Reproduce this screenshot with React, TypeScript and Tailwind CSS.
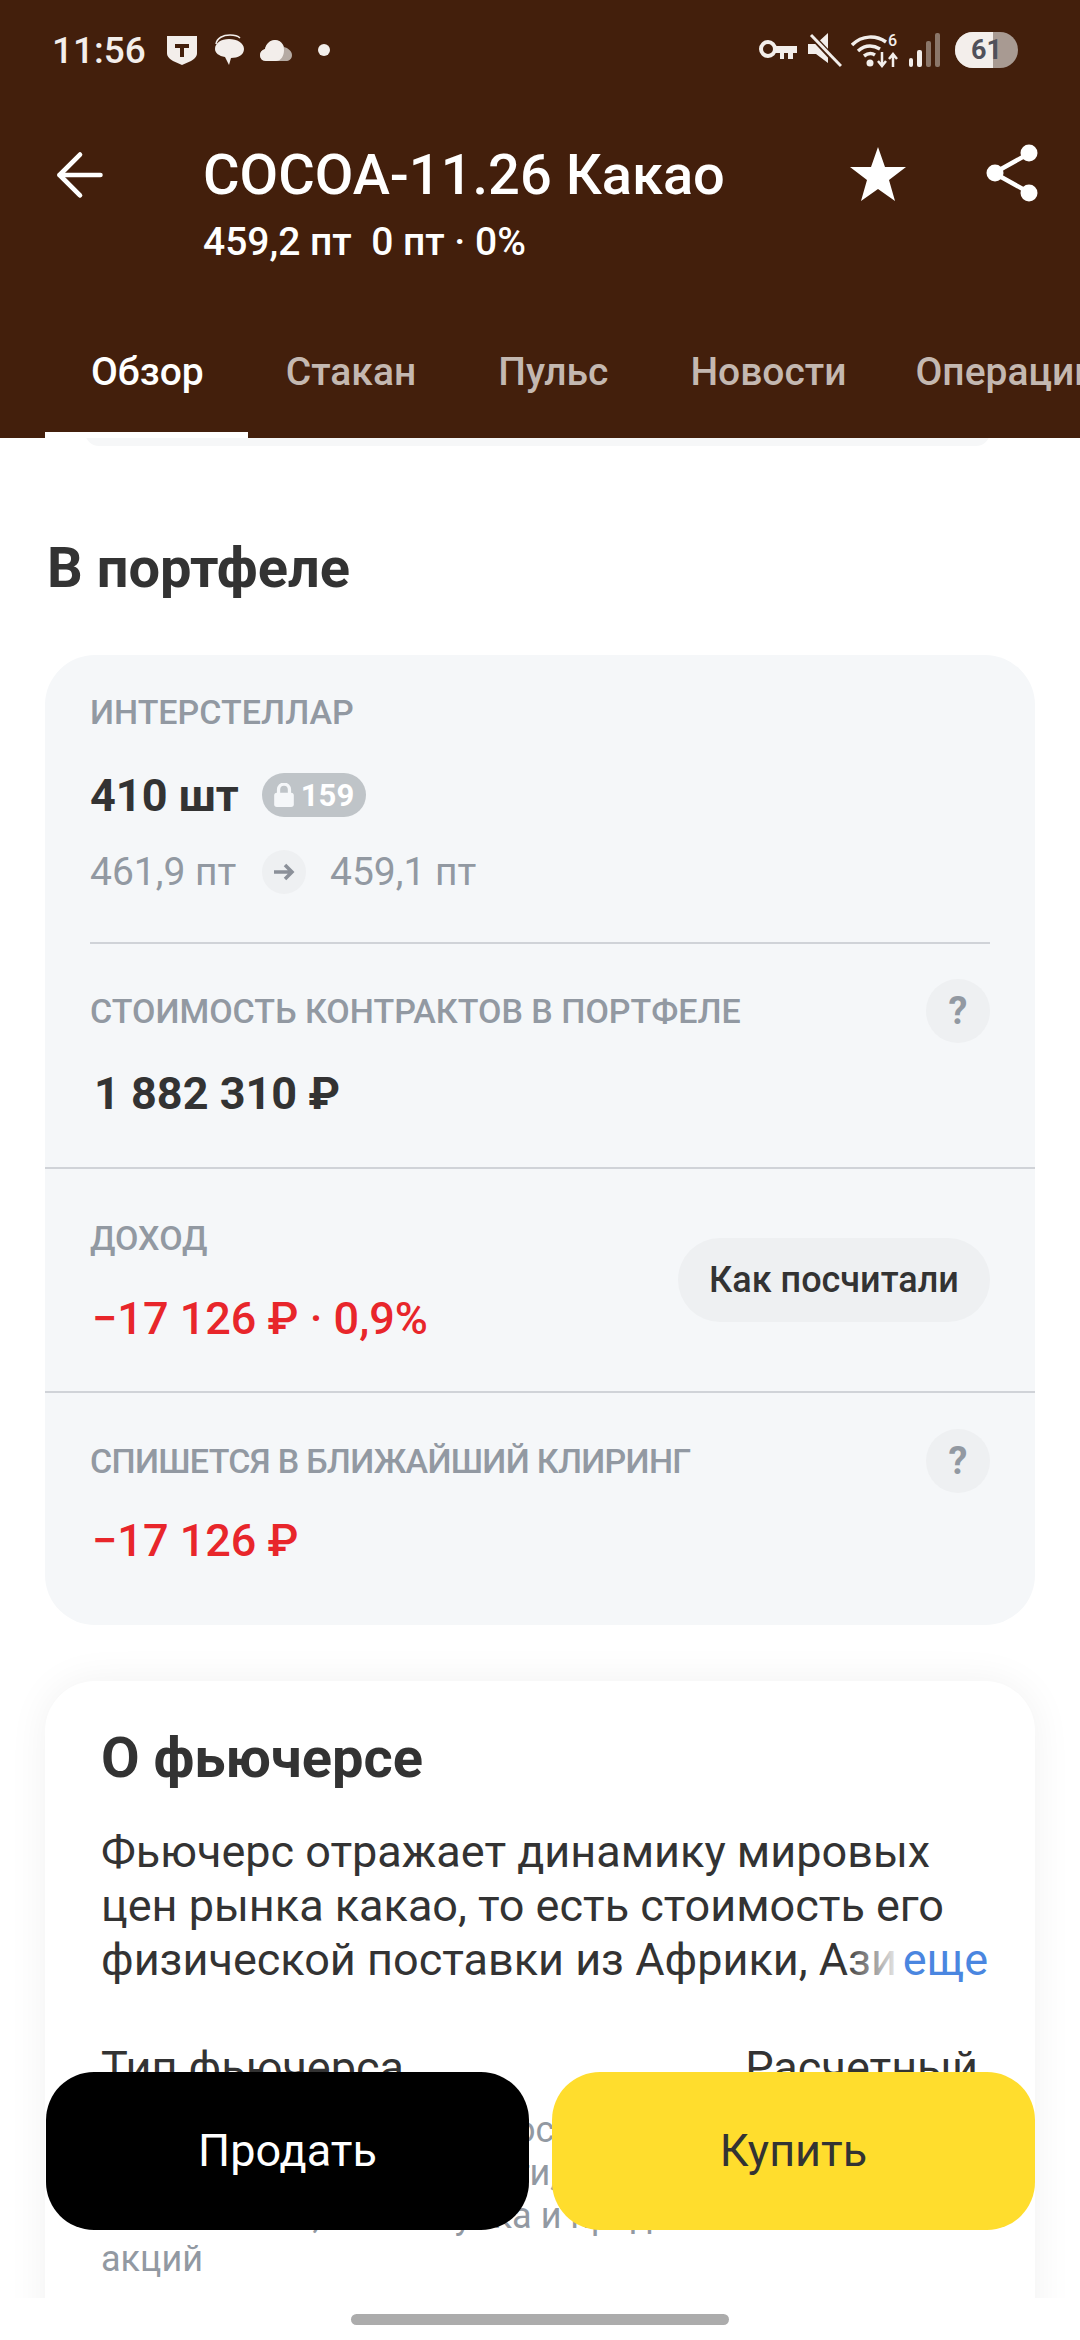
import type { ReactNode } from "react";
import { ArrowLeft } from "lucide-react";

const tabs = ["Обзор", "Стакан", "Пульс", "Новости"];

const StatusBar = () => (
  <div className="flex items-center justify-between h-[100px] pl-[52px] pr-[62px] text-[#f3eeeb]">
    <div className="flex items-center">
      <span className="text-[37px] font-medium leading-none">11:56</span>
      <svg className="ml-[21px]" width="30" height="30" viewBox="0 0 30 30">
        <path d="M0 1h30v17c0 4-3 6-6 8l-9 4-9-4c-3-2-6-4-6-8z" fill="#f3eeeb" />
        <path d="M8 9h14v4h-5v9h-4v-9H8z" fill="#431f0c" />
      </svg>
      <svg className="ml-[16px]" width="32" height="32" viewBox="0 0 32 32">
        <path d="M3 10C4 4 10 1 17 1c4 0 8 1 10 3" fill="none" stroke="#f3eeeb" strokeWidth="1.5" />
        <path d="M2 15c0-6 6-10 14-10s15 4 15 10-6 9-13 9l-2 7-4-8c-6-1-10-4-10-8z" fill="#f3eeeb" />
      </svg>
      <svg className="ml-[15px]" width="32" height="22" viewBox="0 0 32 22">
        <path d="M6 22C2 22 0 19 0 16s2-5 5-6c1-5 5-9 10-9 4 0 8 3 9 7 4 1 8 4 8 8s-3 6-6 6z" fill="#b5aaa3" />
        <path d="M6 22C2 22 0 19 0 16s2-5 5-6c1-5 5-9 10-9 5 0 9 4 9 10 0 6-3 11-8 11z" fill="#f3eeeb" />
      </svg>
      <span className="ml-[26px] w-[12px] h-[12px] rounded-full bg-[#f3eeeb]" />
    </div>
    <div className="flex items-center">
      <svg width="38" height="24" viewBox="0 0 38 24" fill="none">
        <circle cx="9" cy="11" r="7" stroke="#f3eeeb" strokeWidth="4" />
        <path d="M15 8h23v7h-4v6h-5v-6h-4v6h-4v-6h-6z" fill="#f3eeeb" />
      </svg>
      <svg className="ml-[11px]" width="34" height="36" viewBox="0 0 34 36" fill="none">
        <path d="M0 12h8L20 1v30L8 22H0z" fill="#f3eeeb" />
        <path d="M2 2l30 32" stroke="#431f0c" strokeWidth="6" />
        <path d="M3 3l30 31" stroke="#f3eeeb" strokeWidth="3" />
      </svg>
      <svg className="ml-[9px]" width="50" height="36" viewBox="0 0 50 36" fill="none">
        <path d="M1 13C11 3 25 3 35 10" stroke="#f3eeeb" strokeWidth="3.5" />
        <path d="M7 19c7-6 15-6 22-2" stroke="#f3eeeb" strokeWidth="3.5" />
        <path d="M13 24c4-3 8-3 11-1" stroke="#f3eeeb" strokeWidth="3.5" />
        <circle cx="19" cy="31" r="3.5" fill="#f3eeeb" />
        <path d="M31 20v13m-4-4l4 5 4-5M42 35V22m-4 5l4-5 4 5" stroke="#f3eeeb" strokeWidth="2.5" />
        <text x="37" y="14" fontSize="16" fontWeight="500" fill="#f3eeeb" fontFamily="Roboto, sans-serif">6</text>
      </svg>
      <div className="ml-[8px] flex items-end gap-[4px] h-[34px]">
        <span className="w-[4px] h-[9px] rounded-[2px] bg-[#f3eeeb]" />
        <span className="w-[5px] h-[17px] rounded-[2px] bg-[#f3eeeb]" />
        <span className="w-[5px] h-[26px] rounded-[2px] bg-[#8b7669]" />
        <span className="w-[5px] h-[34px] rounded-[2px] bg-[#8b7669]" />
      </div>
      <div className="relative ml-[15px] w-[63px] h-[36px] rounded-full overflow-hidden bg-[#a89a92] flex items-center justify-center">
        <span className="absolute inset-y-0 left-0 w-[38px] bg-[#f3eeeb]" />
        <span className="relative text-[27px] font-bold leading-none text-[#50505a]">61</span>
      </div>
    </div>
  </div>
);

const Header = () => (
  <header className="relative shrink-0 h-[438px] bg-[#431f0c] text-white">
    <StatusBar />
    <div className="flex h-[152px] pt-[42px]">
      <div className="w-[203px] pl-[45px]">
        <ArrowLeft className="-mt-[2px]" size={70} strokeWidth={1.6} />
      </div>
      <div className="flex-1 whitespace-nowrap">
        <h1 className="text-[56px] font-medium leading-[66px]">COCOA-11.26 Какао</h1>
        <p className="text-[39px] font-medium leading-[42px] mt-[13px]">459,2 пт&nbsp;&nbsp;0 пт · 0%</p>
      </div>
      <div className="flex items-start pr-[41px] gap-[79px]">
        <svg className="mt-[5px]" width="56" height="54" viewBox="0 0 56 54">
          <path d="M28 0l7 20h21L39 33l6 21-17-12-17 12 6-21L0 20h21z" fill="white" />
        </svg>
        <svg className="mt-[1px]" width="54" height="60" viewBox="0 0 54 60">
          <path d="M45 10L9 30l36 20" fill="none" stroke="white" strokeWidth="4.5" />
          <circle cx="44" cy="10" r="8.5" fill="white" />
          <circle cx="10" cy="30" r="8.5" fill="white" />
          <circle cx="44" cy="50" r="8.5" fill="white" />
        </svg>
      </div>
    </div>
    <nav className="flex gap-[82px] pl-[91px] mt-[96px] whitespace-nowrap overflow-hidden text-[39px] font-medium leading-[48px]">
      {tabs.map((tab, i) => (
        <span key={tab} className={i === 0 ? "text-white" : "text-[#c4b8b1]"}>
          {tab}
        </span>
      ))}
      <span className="-ml-[13px] text-[#c4b8b1]">Операции</span>
    </nav>
    <div className="absolute left-[45px] bottom-0 w-[203px] h-[6px] bg-white" />
  </header>
);

const HelpDot = () => (
  <span className="flex items-center justify-center w-[64px] h-[64px] rounded-full bg-[#eef0f2] text-[38px] font-bold text-[#9299a2]">
    ?
  </span>
);

const Label = ({ children }: { children: ReactNode }) => (
  <div className="text-[34px] font-medium leading-[44px] text-[#9299a2]">{children}</div>
);

const Portfolio = () => (
  <section className="mt-[55px] mx-[45px] rounded-[50px] bg-[#f5f7f9]">
    <div className="pt-[35px] px-[45px]">
      <Label>ИНТЕРСТЕЛЛАР</Label>
      <div className="flex items-center mt-[39px] h-[44px]">
        <span className="text-[45px] font-bold text-[#333333] leading-none">410 шт</span>
        <span className="ml-[23px] flex items-center gap-[7px] h-[44px] w-[104px] pl-[12px] rounded-full bg-[#bfc4c8] text-white">
          <svg width="20" height="24" viewBox="0 0 18 22" fill="none">
            <path d="M4 10V6a5 5 0 0 1 10 0v4" stroke="#f5f7f9" strokeWidth="3" />
            <rect x="0" y="9" width="18" height="13" rx="2.5" fill="#f5f7f9" />
          </svg>
          <span className="text-[31px] font-bold leading-none">159</span>
        </span>
      </div>
      <div className="flex items-center mt-[33px] h-[44px] text-[39px] leading-none text-[#9299a2]">
        <span className="w-[148px] whitespace-nowrap">461,9 пт</span>
        <span className="ml-[24px] flex items-center justify-center w-[44px] h-[44px] rounded-full bg-[#eef0f2]">
          <svg width="22" height="18" viewBox="0 0 22 18" fill="none">
            <path d="M1 9h18M12 2l7 7-7 7" stroke="#8b9099" strokeWidth="3.5" />
          </svg>
        </span>
        <span className="ml-[24px]">459,1 пт</span>
      </div>
    </div>
    <div className="mx-[45px] mt-[48px] border-t-2 border-[#d0d3d8]" />
    <div className="pt-[35px] px-[45px] h-[223px]">
      <div className="flex items-center justify-between h-[64px]">
        <Label>СТОИМОСТЬ КОНТРАКТОВ В ПОРТФЕЛЕ</Label>
        <HelpDot />
      </div>
      <div className="mt-[26px] pl-[4px] text-[45px] font-bold leading-[50px] text-[#333333]">1 882 310 ₽</div>
    </div>
    <div className="border-t-2 border-[#d0d3d8] px-[45px] h-[224px] flex items-center justify-between">
      <div>
        <Label>ДОХОД</Label>
        <div className="mt-[34px] pl-[2px] text-[45px] font-medium leading-[50px] text-[#e8262b]">−17 126 ₽ · 0,9%</div>
      </div>
      <button className="flex items-center justify-center w-[312px] h-[84px] rounded-[42px] bg-[#eef0f2] text-[36px] font-medium text-[#333333]">
        Как посчитали
      </button>
    </div>
    <div className="border-t-2 border-[#d0d3d8] pt-[36px] px-[45px] h-[234px]">
      <div className="flex items-center justify-between h-[64px]">
        <div className="tracking-[-0.7px]">
          <Label>СПИШЕТСЯ В БЛИЖАЙШИЙ КЛИРИНГ</Label>
        </div>
        <HelpDot />
      </div>
      <div className="mt-[23px] pl-[2px] text-[45px] font-medium leading-[50px] text-[#e8262b]">−17 126 ₽</div>
    </div>
  </section>
);

const About = () => (
  <section className="mt-[56px] mx-[45px] rounded-t-[50px] bg-white px-[56px] pt-[46px] shadow-[0_0_40px_rgba(0,0,0,0.06)] h-[700px]">
    <h2 className="text-[56px] font-bold leading-[62px] text-[#333333]">О фьючерсе</h2>
    <div className="mt-[36px] text-[45px] leading-[54px] text-[#333333] -mr-[9px] whitespace-nowrap">
      <p>Фьючерс отражает динамику мировых</p>
      <p>цен рынка какао, то есть стоимость его</p>
      <p className="relative">
        физической поставки из Африки, Ази
        <span className="absolute top-0 right-0 h-full flex bg-white">
          <span className="absolute top-0 right-full h-full w-[60px] bg-gradient-to-r from-transparent to-white" />
          <span className="text-[#4a86e0]">еще</span>
        </span>
      </p>
    </div>
    <div className="flex justify-between mt-[54px] pr-[1px] text-[45px] leading-[54px] text-[#333333]">
      <span>Тип фьючерса</span>
      <span>Расчетный</span>
    </div>
    <div className="mt-[14px] text-[36px] leading-[43px] text-[#9299a2] whitespace-nowrap">
      <p>В дату исполнения нет поставки актива,</p>
      <p>Участники получат деньги,</p>
      <p>Это не то же, что покупка и продажа</p>
      <p>акций</p>
    </div>
  </section>
);

const App = () => (
  <div className="relative w-[1080px] h-[2340px] overflow-hidden bg-white font-['Roboto',sans-serif] flex flex-col">
    <Header />
    <main className="relative flex-1 min-h-0 overflow-hidden">
      <div className="absolute left-[85px] right-[90px] -top-[20px] h-[28px] rounded-[24px] bg-[#f6f7f8]" />
      <h2 className="relative mt-[98px] pl-[47px] text-[56px] font-bold leading-[64px] text-[#333333]">В портфеле</h2>
      <Portfolio />
      <About />
    </main>
    <div className="absolute left-[46px] right-[45px] top-[2072px] grid grid-cols-2 gap-[23px] h-[158px]">
      <button className="rounded-[48px] bg-black text-[45px] text-white">Продать</button>
      <button className="rounded-[48px] bg-[#ffdd2d] text-[45px] text-[#333333]">Купить</button>
    </div>
    <div className="relative shrink-0 h-[42px] bg-white flex justify-center pt-[16px]">
      <div className="w-[378px] h-[11px] rounded-full bg-[#acacac]" />
    </div>
  </div>
);

export default App;
